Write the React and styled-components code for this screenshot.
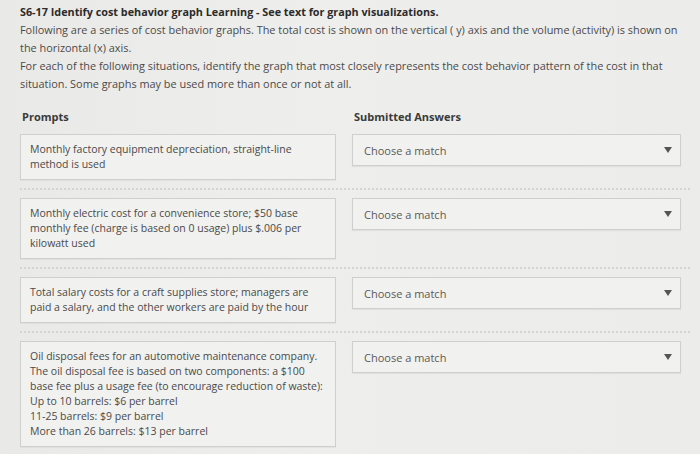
import React from "react";
import styled, { createGlobalStyle } from "styled-components";

const GlobalStyle = createGlobalStyle`
  html, body {
    margin: 0;
    background: #ebebe9;
  }
  body {
    font-family: "Open Sans", "Liberation Sans", sans-serif;
    color: #454545;
  }
`;

const Page = styled.div`
  width: 700px;
  height: 454px;
  box-sizing: border-box;
  padding: 3px 10px 0 20px;
  overflow: hidden;
  background: linear-gradient(90deg, #e9e9e7 0%, #eeeeec 45%, #ececea 100%);
`;

const Intro = styled.div`
  font-size: 10.9px;
  line-height: 18px;
  color: #4a4a4a;
  p {
    margin: 0;
  }
`;

const Title = styled.div`
  font-weight: 700;
  font-size: 10.8px;
  color: #2b2b2b;
`;

const Columns = styled.div`
  display: grid;
  grid-template-columns: 316px 329px;
  column-gap: 16px;
  padding-right: 7px;
`;

const Heading = styled(Columns)`
  margin-top: 15px;
  font-size: 11px;
  line-height: 18px;
  font-weight: 700;
  color: #3a3a3a;
  span {
    padding-left: 2px;
  }
`;

const Row = styled(Columns)`
  padding: 8px 7px 8px 0;
  align-items: start;
  border-bottom: ${(p) => (p.$last ? "none" : "2px dotted #d4d4d2")};
`;

const Prompt = styled.div`
  padding: 7px 9px;
  background: #f1f1ef;
  border: 1px solid #cfcfcd;
  box-shadow: 0 1px 1px rgba(0, 0, 0, 0.04);
  font-size: 10.5px;
  line-height: 15px;
  color: #4a4a4a;
  white-space: nowrap;
`;

const Select = styled.div`
  display: flex;
  align-items: center;
  justify-content: space-between;
  height: 30px;
  padding: 0 8px 0 11px;
  background: #f1f1ef;
  border: 1px solid #cfcfcd;
  box-shadow: 0 1px 1px rgba(0, 0, 0, 0.05);
  font-size: 11px;
  color: #5a5a5a;
`;

const Arrow = styled.span`
  width: 0;
  height: 0;
  border-left: 4px solid transparent;
  border-right: 4px solid transparent;
  border-top: 6px solid #555;
`;

const prompts = [
  ["Monthly factory equipment depreciation, straight-line", "method is used"],
  [
    "Monthly electric cost for a convenience store; $50 base",
    "monthly fee (charge is based on 0 usage) plus $.006 per",
    "kilowatt used",
  ],
  [
    "Total salary costs for a craft supplies store; managers are",
    "paid a salary, and the other workers are paid by the hour",
  ],
  [
    "Oil disposal fees for an automotive maintenance company.",
    "The oil disposal fee is based on two components: a $100",
    "base fee plus a usage fee (to encourage reduction of waste):",
    "Up to 10 barrels: $6 per barrel",
    "11-25 barrels: $9 per barrel",
    "More than 26 barrels: $13 per barrel",
  ],
];

export default function App() {
  return (
    <Page>
      <GlobalStyle />
      <Intro>
        <Title>
          S6-17 Identify cost behavior graph Learning - See text for graph
          visualizations.
        </Title>
        <p>
          Following are a series of cost behavior graphs. The total cost is
          shown on the vertical ( y) axis and the volume (activity) is shown on
          the horizontal (x) axis.
        </p>
        <p>
          For each of the following situations, identify the graph that most
          closely represents the cost behavior pattern of the cost in that
          situation. Some graphs may be used more than once or not at all.
        </p>
      </Intro>
      <Heading>
        <span>Prompts</span>
        <span>Submitted Answers</span>
      </Heading>
      {prompts.map((lines, i) => (
        <Row key={i} $last={i === prompts.length - 1}>
          <Prompt>
            {lines.map((l, j) => (
              <div key={j}>{l}</div>
            ))}
          </Prompt>
          <Select>
            <span>Choose a match</span>
            <Arrow />
          </Select>
        </Row>
      ))}
    </Page>
  );
}
